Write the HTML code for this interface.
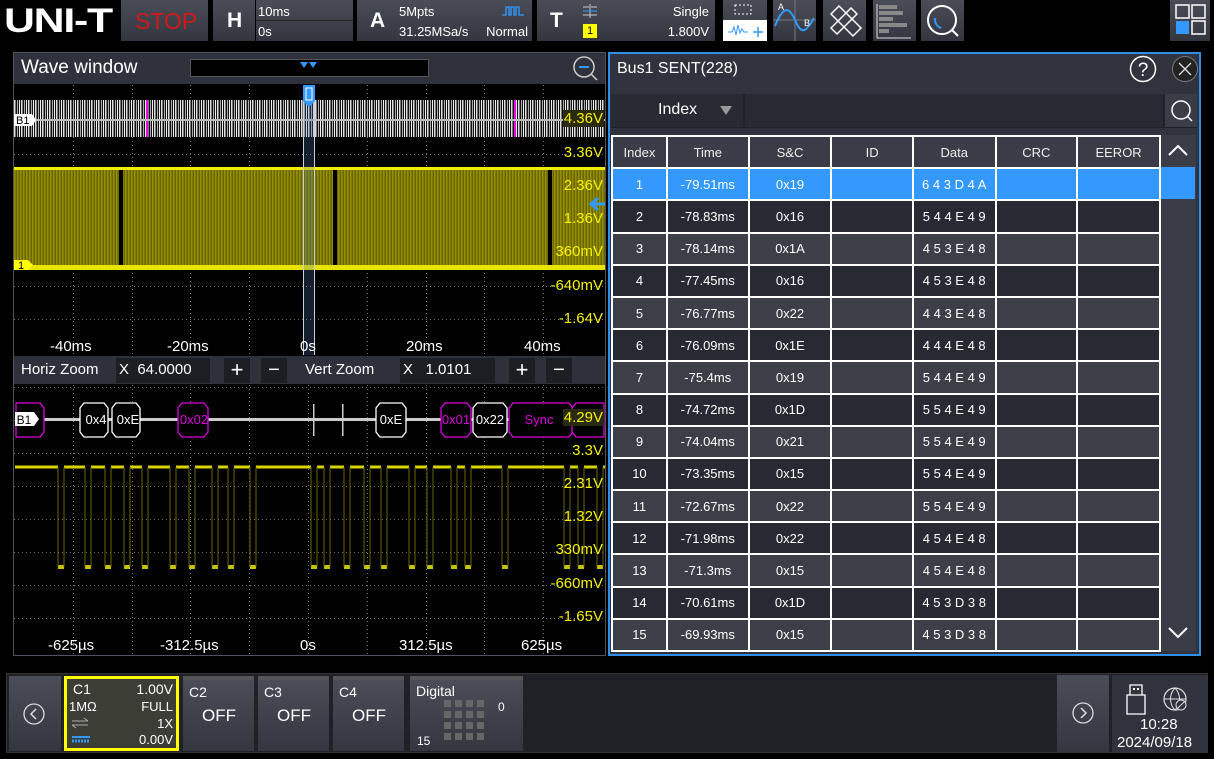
<!DOCTYPE html>
<html><head><meta charset="utf-8"><style>
*{margin:0;padding:0;box-sizing:border-box}
body{width:1214px;height:759px;background:#000;position:relative;overflow:hidden;font-family:"Liberation Sans",sans-serif;color:#fff}
.a{position:absolute}
.blk{position:absolute;background:linear-gradient(#4a4d57,#33363f);}
.t14{font-size:13px}
.yl{color:#f4f000;font-size:15px;position:absolute;right:0;padding:0 1px}
.bg{background:#2a2a10}
table{border-collapse:collapse;position:absolute;left:611px;top:135px;width:550px;font-size:13px}
td{border:2px solid #fff;height:32.2px;text-align:center;padding:0}
tr.h td{background:#3a3d47;color:#eee}
tr.d td{background:#272a33}
tr.l td{background:#3c3f48}
tr.s td{background:#3399ff}
</style></head><body>
<div class="a" style="left:4px;top:3px;font-size:34px;font-weight:bold;letter-spacing:-1px;line-height:36px;transform:scaleX(1.26);transform-origin:0 0">UNI-T</div>
<div class="blk" style="left:121px;top:0;width:87px;height:41px"><div class="a" style="left:14px;top:8px;color:#d01818;font-size:23px">STOP</div></div>
<div class="blk" style="left:213px;top:0;width:42px;height:41px"><div class="a" style="left:14px;top:9px;font-size:21px;font-weight:bold">H</div></div>
<div class="blk" style="left:256px;top:0;width:97px;height:41px"><div class="a t14" style="left:2px;top:4px">10ms</div><div class="a t14" style="left:2px;top:24px">0s</div><div class="a" style="left:0;top:20px;width:97px;height:1px;background:#222"></div></div>
<div class="blk" style="left:357px;top:0;width:40px;height:41px"><div class="a" style="left:13px;top:9px;font-size:21px;font-weight:bold">A</div></div>
<div class="blk" style="left:397px;top:0;width:135px;height:41px"><div class="a t14" style="left:2px;top:4px">5Mpts</div><div class="a t14" style="left:2px;top:24px">31.25MSa/s</div><div class="a t14" style="right:4px;top:24px">Normal</div>
<svg class="a" style="left:104px;top:5px" width="24" height="12"><path d="M1 10h4v-8h3v8h2v-8h3v8h2v-8h3v8h5" fill="none" stroke="#39f" stroke-width="1.3"/></svg></div>
<div class="blk" style="left:537px;top:0;width:40px;height:41px"><div class="a" style="left:13px;top:9px;font-size:21px;font-weight:bold">T</div></div>
<div class="blk" style="left:577px;top:0;width:138px;height:41px"><div class="a t14" style="right:6px;top:4px">Single</div><div class="a t14" style="right:6px;top:24px">1.800V</div>
<div class="a" style="left:6px;top:24px;width:14px;height:14px;background:#ff0;color:#000;font-size:11px;text-align:center;line-height:14px">1</div>
<svg class="a" style="left:5px;top:3px" width="16" height="16"><path d="M1 4h6M9 4h6M8 1v14M1 12h14" stroke="#ccc" fill="none"/><path d="M1 8h14" stroke="#39f"/></svg></div>
<div class="blk" style="left:723px;top:0;width:44px;height:41px"><div class="a" style="left:0;top:20px;width:44px;height:21px;background:#fff"></div>
<svg class="a" style="left:2px;top:2px" width="40" height="38"><rect x="10" y="3" width="16" height="9" fill="none" stroke="#fff" stroke-dasharray="2 2"/><path d="M3 30h4l2-5 2 8 2-10 2 8 2-4 2 3h4" stroke="#39f" fill="none"/><path d="M28 30h10M33 25v10" stroke="#39f" stroke-width="1.5"/></svg></div>
<div class="blk" style="left:773px;top:0;width:43px;height:41px"><svg width="43" height="41"><path d="M1 20h42M22 0v41" stroke="#777"/><path d="M2 26C10 6 16 6 22 20S32 34 41 18" stroke="#39f" stroke-width="2" fill="none"/><text x="5" y="10" font-size="9" fill="#fff">A</text><text x="31" y="26" font-size="9" fill="#fff">B</text></svg></div>
<div class="blk" style="left:823px;top:0;width:43px;height:41px"><svg width="43" height="41"><g fill="none" stroke="#fff" stroke-width="1.5"><path d="M8 14l8-8 22 22-8 8z"/><path d="M8 28l20-20 6 6-20 20z"/></g></svg></div>
<div class="blk" style="left:873px;top:0;width:43px;height:41px"><svg width="43" height="41"><path d="M4 4v34h34" stroke="#ddd" fill="none"/><g fill="#888"><rect x="6" y="5" width="18" height="4"/><rect x="6" y="11" width="24" height="4"/><rect x="6" y="17" width="14" height="4"/><rect x="6" y="23" width="28" height="4"/><rect x="6" y="29" width="10" height="4"/></g></svg></div>
<div class="blk" style="left:921px;top:0;width:43px;height:41px"><svg width="43" height="41"><circle cx="21" cy="20" r="14" stroke="#fff" stroke-width="2" fill="none"/><path d="M31 30l6 6" stroke="#fff" stroke-width="2"/><path d="M14 18a9 9 0 0 0 6 10" stroke="#39f" stroke-width="2" fill="none"/></svg></div>
<div class="blk" style="left:1170px;top:0;width:40px;height:41px"><svg width="40" height="41"><g fill="none" stroke="#fff" stroke-width="1.5"><rect x="6" y="5" width="13" height="13"/><rect x="22" y="5" width="13" height="13"/><rect x="22" y="21" width="13" height="13"/></g><rect x="6" y="21" width="13" height="13" fill="#39f"/></svg></div>

<div class="a" style="left:13px;top:52px;width:593px;height:604px;border:1px solid #50535c;background:#000"></div>
<div class="a" style="left:14px;top:53px;width:591px;height:31px;background:#2f323c"></div>
<div class="a" style="left:21px;top:57px;font-size:19px">Wave window</div>
<div class="a" style="left:190px;top:59px;width:239px;height:18px;background:#000;border:1px solid #555"></div>
<svg class="a" style="left:300px;top:62px" width="20" height="8"><path d="M0 0h8l-4 6zM9 0h8l-4 6z" fill="#39f"/></svg>
<svg class="a" style="left:571px;top:55px" width="28" height="28"><circle cx="13" cy="12" r="10" stroke="#ccc" fill="none" stroke-width="1.5"/><path d="M8 12h10" stroke="#39f" stroke-width="2"/><path d="M20 19l6 6" stroke="#ccc" stroke-width="1.5"/></svg>

<svg class="a" style="left:14px;top:85px" width="591" height="570">
<defs>
<pattern id="gd" width="4" height="1" patternUnits="userSpaceOnUse"><rect width="1" height="1" fill="#777"/></pattern>
<pattern id="gv" width="1" height="4" patternUnits="userSpaceOnUse"><rect width="1" height="1" fill="#777"/></pattern>
<pattern id="bus" width="7" height="10" patternUnits="userSpaceOnUse"><rect width="7" height="10" fill="#111"/><rect x="0" width="1.5" height="10" fill="#ddd"/><rect x="3" width="1" height="10" fill="#aaa"/><rect x="5" width="1" height="10" fill="#eee"/></pattern>
<pattern id="yb" width="3" height="10" patternUnits="userSpaceOnUse"><rect width="3" height="10" fill="#6a6700"/><rect width="1.5" height="10" fill="#948f00"/></pattern>
</defs>
<g>
<rect x="0" y="36" width="591" height="1" fill="url(#gd)"/><rect x="0" y="69" width="591" height="1" fill="url(#gd)"/><rect x="0" y="102" width="591" height="1" fill="url(#gd)"/><rect x="0" y="135" width="591" height="1" fill="url(#gd)"/><rect x="0" y="168" width="591" height="1" fill="url(#gd)"/><rect x="0" y="201" width="591" height="1" fill="url(#gd)"/><rect x="0" y="234" width="591" height="1" fill="url(#gd)"/>
<rect x="59" y="0" width="1" height="270" fill="url(#gv)"/><rect x="118" y="0" width="1" height="270" fill="url(#gv)"/><rect x="176" y="0" width="1" height="270" fill="url(#gv)"/><rect x="235" y="0" width="1" height="270" fill="url(#gv)"/><rect x="353" y="0" width="1" height="270" fill="url(#gv)"/><rect x="412" y="0" width="1" height="270" fill="url(#gv)"/><rect x="470" y="0" width="1" height="270" fill="url(#gv)"/><rect x="529" y="0" width="1" height="270" fill="url(#gv)"/>
</g>
<rect x="0" y="15" width="591" height="37" fill="url(#bus)"/>
<rect x="132" y="15" width="2" height="37" fill="#e0e"/><rect x="500" y="15" width="2" height="37" fill="#e0e"/>
<rect x="0" y="34" width="591" height="2" fill="#bbb"/>
<rect x="0" y="84" width="591" height="100" fill="url(#yb)"/>
<rect x="105" y="82" width="4" height="104" fill="#000"/><rect x="319" y="82" width="4" height="104" fill="#000"/><rect x="534" y="82" width="4" height="104" fill="#000"/>
<rect x="0" y="82" width="591" height="3" fill="#f0ec00"/><rect x="0" y="180" width="591" height="5" fill="#e8e400"/>
<rect x="289" y="0" width="12" height="270" fill="rgba(80,120,180,.25)"/>
<rect x="289" y="0" width="1" height="270" fill="#ccd"/><rect x="300" y="0" width="1" height="270" fill="#ccd"/>
<path d="M289 0h12v16l-6 6-6-6z" fill="#39f"/><rect x="292" y="3" width="6" height="12" fill="none" stroke="#fff"/>
<g transform="translate(0,300)">
<rect x="0" y="2" width="591" height="1" fill="url(#gd)"/><rect x="0" y="35" width="591" height="1" fill="url(#gd)"/><rect x="0" y="68" width="591" height="1" fill="url(#gd)"/><rect x="0" y="101" width="591" height="1" fill="url(#gd)"/><rect x="0" y="134" width="591" height="1" fill="url(#gd)"/><rect x="0" y="167" width="591" height="1" fill="url(#gd)"/><rect x="0" y="200" width="591" height="1" fill="url(#gd)"/><rect x="0" y="233" width="591" height="1" fill="url(#gd)"/>
<rect x="59" y="0" width="1" height="270" fill="url(#gv)"/><rect x="118" y="0" width="1" height="270" fill="url(#gv)"/><rect x="176" y="0" width="1" height="270" fill="url(#gv)"/><rect x="235" y="0" width="1" height="270" fill="url(#gv)"/><rect x="294" y="0" width="1" height="270" fill="url(#gv)"/><rect x="353" y="0" width="1" height="270" fill="url(#gv)"/><rect x="412" y="0" width="1" height="270" fill="url(#gv)"/><rect x="470" y="0" width="1" height="270" fill="url(#gv)"/><rect x="529" y="0" width="1" height="270" fill="url(#gv)"/>
</g>
<g transform="translate(-14,-85)" font-size="13" text-anchor="middle">
<rect x="15" y="418" width="580" height="3" fill="#ccc"/>
<g fill="#000" stroke-width="1.3">
<path d="M16 403h24l4 5v24l-4 5h-24z" stroke="#d0d"/>
<path d="M84 403h20l4 5v24l-4 5h-20l-4-5v-24z" stroke="#fff"/>
<path d="M116 403h20l4 5v24l-4 5h-20l-4-5v-24z" stroke="#fff"/>
<path d="M182 403h22l4 5v24l-4 5h-22l-4-5v-24z" stroke="#d0d"/>
<path d="M380 403h22l4 5v24l-4 5h-22l-4-5v-24z" stroke="#fff"/>
<path d="M445 403h22l4 5v24l-4 5h-22l-4-5v-24z" stroke="#d0d"/>
<path d="M477 403h26l4 5v24l-4 5h-26l-4-5v-24z" stroke="#fff"/>
<path d="M513 403h56l4 5v24l-4 5h-56l-4-5v-24z" stroke="#d0d"/>
<path d="M576 403h28v34h-28l-4-5v-24z" stroke="#d0d"/>
</g>
<rect x="313" y="404" width="1.5" height="32" fill="#ccc"/><rect x="342" y="404" width="1.5" height="32" fill="#ccc"/>
<text x="96" y="424" fill="#fff">0x4</text><text x="128" y="424" fill="#fff">0xE</text><text x="194" y="424" fill="#d0d">0x02</text><text x="391" y="424" fill="#fff">0xE</text><text x="456" y="424" fill="#d0d">0x01</text><text x="490" y="424" fill="#fff">0x22</text><text x="539" y="424" fill="#d0d">Sync</text>
<path d="M15 412h19l5 7-5 7h-19z" fill="#fff"/><text x="24" y="424" fill="#000" font-size="12">B1</text>
<path fill="none" stroke="#d8d400" stroke-width="3" d="M15 467H58 M64 467H85 M91 467H105 M111 467H124 M130 467H142 M148 467H170 M176 467H189 M195 467H212 M218 467H228 M234 467H250 M256 467H311 M317 467H324 M330 467H344 M350 467H364 M370 467H381 M387 467H409 M415 467H427 M433 467H451 M457 467H465 M471 467H502 M508 467H564 M570 467H578 M584 467H597 M603 467H605"/>
<g fill="#c8c400"><rect x="58" y="565" width="6" height="4"/><rect x="85" y="565" width="6" height="4"/><rect x="105" y="565" width="6" height="4"/><rect x="124" y="565" width="6" height="4"/><rect x="142" y="565" width="6" height="4"/><rect x="170" y="565" width="6" height="4"/><rect x="189" y="565" width="6" height="4"/><rect x="212" y="565" width="6" height="4"/><rect x="228" y="565" width="6" height="4"/><rect x="250" y="565" width="6" height="4"/><rect x="311" y="565" width="6" height="4"/><rect x="324" y="565" width="6" height="4"/><rect x="344" y="565" width="6" height="4"/><rect x="364" y="565" width="6" height="4"/><rect x="381" y="565" width="6" height="4"/><rect x="409" y="565" width="6" height="4"/><rect x="427" y="565" width="6" height="4"/><rect x="451" y="565" width="6" height="4"/><rect x="465" y="565" width="6" height="4"/><rect x="502" y="565" width="6" height="4"/><rect x="564" y="565" width="6" height="4"/><rect x="578" y="565" width="6" height="4"/><rect x="597" y="565" width="6" height="4"/></g>
<path stroke="#6a6800" stroke-width="1" d="M58 467V567M64 467V567M85 467V567M91 467V567M105 467V567M111 467V567M124 467V567M130 467V567M142 467V567M148 467V567M170 467V567M176 467V567M189 467V567M195 467V567M212 467V567M218 467V567M228 467V567M234 467V567M250 467V567M256 467V567M311 467V567M317 467V567M324 467V567M330 467V567M344 467V567M350 467V567M364 467V567M370 467V567M381 467V567M387 467V567M409 467V567M415 467V567M427 467V567M433 467V567M451 467V567M457 467V567M465 467V567M471 467V567M502 467V567M508 467V567M564 467V567M570 467V567M578 467V567M584 467V567M597 467V567M603 467V567"/>
</g>
<path d="M0 175h14l5 5-5 5h-14z" fill="#ff0"/>
<text x="4" y="184" font-size="11" fill="#000">1</text>
<path d="M0 29h18l4 6-4 6h-18z" fill="#fff"/><text x="2" y="39" font-size="11" fill="#000">B1</text>
<path d="M591 119h-14M584 113l-7 6 7 6" stroke="#39f" stroke-width="3" fill="none"/>
</svg>
<div class="a" style="left:540px;top:110px;width:64px;height:240px">
<span class="yl bg" style="top:0">4.36V</span><span class="yl" style="top:34px">3.36V</span><span class="yl" style="top:67px">2.36V</span><span class="yl" style="top:100px">1.36V</span><span class="yl" style="top:133px">360mV</span><span class="yl" style="top:167px">-640mV</span><span class="yl" style="top:200px">-1.64V</span></div>
<div class="a" style="top:338px;left:0;font-size:15px"><span class="a" style="left:50px">-40ms</span><span class="a" style="left:167px">-20ms</span><span class="a" style="left:300px">0s</span><span class="a" style="left:406px">20ms</span><span class="a" style="left:524px">40ms</span></div>
<div class="a" style="left:14px;top:356px;width:591px;height:28px;background:#2e313b"></div>
<div class="a" style="left:21px;top:361px;font-size:15px">Horiz Zoom</div>
<div class="a" style="left:116px;top:358px;width:94px;height:25px;background:#1c1e24;font-size:15px;padding:3px 0 0 3px">X&nbsp;&nbsp;64.0000</div>
<div class="a" style="left:224px;top:358px;width:26px;height:25px;background:#1c1e24;font-size:22px;text-align:center;line-height:24px">+</div>
<div class="a" style="left:261px;top:358px;width:26px;height:25px;background:#1c1e24;font-size:20px;text-align:center;line-height:24px">−</div>
<div class="a" style="left:305px;top:361px;font-size:15px">Vert Zoom</div>
<div class="a" style="left:400px;top:358px;width:95px;height:25px;background:#1c1e24;font-size:15px;padding:3px 0 0 3px">X&nbsp;&nbsp;&nbsp;1.0101</div>
<div class="a" style="left:509px;top:358px;width:26px;height:25px;background:#1c1e24;font-size:22px;text-align:center;line-height:24px">+</div>
<div class="a" style="left:546px;top:358px;width:26px;height:25px;background:#1c1e24;font-size:20px;text-align:center;line-height:24px">−</div>
<div class="a" style="left:540px;top:409px;width:64px;height:220px">
<span class="yl bg" style="top:0">4.29V</span><span class="yl" style="top:33px">3.3V</span><span class="yl" style="top:66px">2.31V</span><span class="yl" style="top:99px">1.32V</span><span class="yl" style="top:132px">330mV</span><span class="yl" style="top:166px">-660mV</span><span class="yl" style="top:199px">-1.65V</span></div>
<div class="a" style="top:637px;left:0;font-size:15px"><span class="a" style="left:48px">-625µs</span><span class="a" style="left:160px">-312.5µs</span><span class="a" style="left:300px">0s</span><span class="a" style="left:399px">312.5µs</span><span class="a" style="left:521px">625µs</span></div>

<div class="a" style="left:608px;top:52px;width:593px;height:604px;border:2px solid #2f8fe8;background:#30333d"></div>
<div class="a" style="left:617px;top:60px;font-size:16px">Bus1 SENT(228)</div>
<svg class="a" style="left:1128px;top:54px" width="72" height="30"><circle cx="15" cy="15" r="12.5" stroke="#fff" stroke-width="1.5" fill="none"/><text x="15" y="22" font-size="19" fill="#fff" text-anchor="middle">?</text><circle cx="57" cy="15" r="12.5" fill="#222" stroke="#777"/><path d="M51 9l12 12M63 9l-12 12" stroke="#ddd" stroke-width="1.3"/></svg>
<div class="a" style="left:611px;top:94px;width:586px;height:34px;background:#1d2027"></div>
<div class="a" style="left:611px;top:94px;width:132px;height:33px;background:#272a33"></div>
<div class="a" style="left:658px;top:101px;font-size:16px">Index</div>
<svg class="a" style="left:720px;top:106px" width="12" height="9"><path d="M0 0h12l-6 9z" fill="#999"/></svg>
<div class="a" style="left:745px;top:94px;width:418px;height:33px;background:#272a33"></div>
<div class="a" style="left:1165px;top:94px;width:32px;height:33px;background:#3a3d47"></div>
<svg class="a" style="left:1169px;top:98px" width="26" height="26"><circle cx="12" cy="12" r="9" stroke="#fff" stroke-width="1.5" fill="none"/><path d="M18 18l5 5" stroke="#fff" stroke-width="1.5"/></svg>
<div class="a" style="left:1161px;top:135px;width:35px;height:516px;background:#3a3d47"></div>
<div class="a" style="left:1161px;top:167px;width:34px;height:32px;background:#3399ff"></div>
<svg class="a" style="left:1167px;top:143px" width="22" height="14"><path d="M2 12l9-9 9 9" stroke="#fff" stroke-width="2" fill="none"/></svg>
<svg class="a" style="left:1167px;top:626px" width="22" height="14"><path d="M2 2l9 9 9-9" stroke="#fff" stroke-width="2" fill="none"/></svg>
<table>
<colgroup><col style="width:55px"><col style="width:82px"><col style="width:83px"><col style="width:82px"><col style="width:83px"><col style="width:82px"><col style="width:83px"></colgroup>
<tr class="h"><td>Index</td><td>Time</td><td>S&amp;C</td><td>ID</td><td>Data</td><td>CRC</td><td>EEROR</td></tr>
<tr class="s"><td>1</td><td>-79.51ms</td><td>0x19</td><td></td><td>6 4 3 D 4 A</td><td></td><td></td></tr>
<tr class="d"><td>2</td><td>-78.83ms</td><td>0x16</td><td></td><td>5 4 4 E 4 9</td><td></td><td></td></tr>
<tr class="l"><td>3</td><td>-78.14ms</td><td>0x1A</td><td></td><td>4 5 3 E 4 8</td><td></td><td></td></tr>
<tr class="d"><td>4</td><td>-77.45ms</td><td>0x16</td><td></td><td>4 5 3 E 4 8</td><td></td><td></td></tr>
<tr class="l"><td>5</td><td>-76.77ms</td><td>0x22</td><td></td><td>4 4 3 E 4 8</td><td></td><td></td></tr>
<tr class="d"><td>6</td><td>-76.09ms</td><td>0x1E</td><td></td><td>4 4 4 E 4 8</td><td></td><td></td></tr>
<tr class="l"><td>7</td><td>-75.4ms</td><td>0x19</td><td></td><td>5 4 4 E 4 9</td><td></td><td></td></tr>
<tr class="d"><td>8</td><td>-74.72ms</td><td>0x1D</td><td></td><td>5 5 4 E 4 9</td><td></td><td></td></tr>
<tr class="l"><td>9</td><td>-74.04ms</td><td>0x21</td><td></td><td>5 5 4 E 4 9</td><td></td><td></td></tr>
<tr class="d"><td>10</td><td>-73.35ms</td><td>0x15</td><td></td><td>5 5 4 E 4 9</td><td></td><td></td></tr>
<tr class="l"><td>11</td><td>-72.67ms</td><td>0x22</td><td></td><td>5 5 4 E 4 9</td><td></td><td></td></tr>
<tr class="d"><td>12</td><td>-71.98ms</td><td>0x22</td><td></td><td>4 5 4 E 4 8</td><td></td><td></td></tr>
<tr class="l"><td>13</td><td>-71.3ms</td><td>0x15</td><td></td><td>4 5 4 E 4 8</td><td></td><td></td></tr>
<tr class="d"><td>14</td><td>-70.61ms</td><td>0x1D</td><td></td><td>4 5 3 D 3 8</td><td></td><td></td></tr>
<tr class="l"><td>15</td><td>-69.93ms</td><td>0x15</td><td></td><td>4 5 3 D 3 8</td><td></td><td></td></tr>
</table>

<div class="a" style="left:6px;top:673px;width:1202px;height:80px;background:#1f2127;border:1px solid #333"></div>
<div class="blk" style="left:9px;top:676px;width:52px;height:75px"><svg class="a" style="left:13px;top:26px" width="24" height="24"><circle cx="12" cy="12" r="10" stroke="#ddd" fill="none" stroke-width="1.3"/><path d="M14 7l-5 5 5 5" stroke="#ddd" stroke-width="1.5" fill="none"/></svg></div>
<div class="a" style="left:64px;top:676px;width:115px;height:75px;background:#ff0;padding:3px"><div style="width:100%;height:100%;background:#3c3d35;position:relative;font-size:13px">
<span class="a" style="left:6px;top:2px;font-size:14px">C1</span><span class="a" style="right:3px;top:2px;font-size:14px">1.00V</span>
<span class="a" style="left:2px;top:20px">1MΩ</span><span class="a" style="right:3px;top:20px">FULL</span>
<span class="a" style="right:3px;top:37px">1X</span><span class="a" style="right:3px;top:53px">0.00V</span>
<svg class="a" style="left:4px;top:38px" width="20" height="30"><path d="M1 4h16M13 1l4 3M1 8h16M1 8l4 3" stroke="#aaa" fill="none"/><path d="M1 20h18" stroke="#39f" stroke-width="2"/><path d="M1 24h18" stroke="#39f" stroke-width="3" stroke-dasharray="2 1"/></svg></div></div>
<div class="blk" style="left:183px;top:676px;width:71px;height:75px;border-top:4px solid #555"><span class="a" style="left:6px;top:4px;font-size:14px">C2</span><span class="a" style="left:19px;top:26px;font-size:17px">OFF</span></div>
<div class="blk" style="left:258px;top:676px;width:71px;height:75px;border-top:4px solid #555"><span class="a" style="left:6px;top:4px;font-size:14px">C3</span><span class="a" style="left:19px;top:26px;font-size:17px">OFF</span></div>
<div class="blk" style="left:333px;top:676px;width:71px;height:75px;border-top:4px solid #555"><span class="a" style="left:6px;top:4px;font-size:14px">C4</span><span class="a" style="left:19px;top:26px;font-size:17px">OFF</span></div>
<div class="blk" style="left:410px;top:676px;width:113px;height:75px;border-top:4px solid #555"><span class="a" style="left:6px;top:3px;font-size:14px">Digital</span><span class="a" style="left:88px;top:20px;font-size:12px">0</span><span class="a" style="left:7px;top:54px;font-size:12px">15</span>
<svg class="a" style="left:34px;top:20px" width="44" height="44"><g fill="#666"><rect x="0" y="0" width="7" height="7"/><rect x="11" y="0" width="7" height="7"/><rect x="22" y="0" width="7" height="7"/><rect x="33" y="0" width="7" height="7"/><rect x="0" y="11" width="7" height="7"/><rect x="11" y="11" width="7" height="7"/><rect x="22" y="11" width="7" height="7"/><rect x="33" y="11" width="7" height="7"/><rect x="0" y="22" width="7" height="7"/><rect x="11" y="22" width="7" height="7"/><rect x="22" y="22" width="7" height="7"/><rect x="33" y="22" width="7" height="7"/><rect x="0" y="33" width="7" height="7"/><rect x="11" y="33" width="7" height="7"/><rect x="22" y="33" width="7" height="7"/><rect x="33" y="33" width="7" height="7"/></g></svg></div>
<div class="blk" style="left:1057px;top:675px;width:52px;height:77px"><svg class="a" style="left:14px;top:26px" width="24" height="24"><circle cx="12" cy="12" r="10" stroke="#ddd" fill="none" stroke-width="1.3"/><path d="M10 7l5 5-5 5" stroke="#ddd" stroke-width="1.5" fill="none"/></svg></div>
<div class="a" style="left:1112px;top:675px;width:95px;height:77px;background:#30333d">
<svg class="a" style="left:10px;top:6px" width="66" height="36"><path d="M8 4h12v10h-12zM5 14h18v19h-18z" stroke="#fff" fill="none" stroke-width="1.3"/><rect x="11" y="7" width="2" height="2" fill="#fff"/><rect x="15" y="7" width="2" height="2" fill="#fff"/><circle cx="53" cy="18" r="11" stroke="#ddd" fill="none" stroke-width="1.2"/><path d="M42 18h22M53 7c-6 6-6 16 0 22M53 7c6 6 6 16 0 22" stroke="#ddd" fill="none"/><circle cx="59" cy="24" r="5" fill="#30333d" stroke="#ddd"/><path d="M56 27l6-6" stroke="#ddd"/></svg>
<div class="a" style="left:28px;top:41px;font-size:15px">10:28</div>
<div class="a" style="left:5px;top:59px;font-size:15px">2024/09/18</div></div>
</body></html>
